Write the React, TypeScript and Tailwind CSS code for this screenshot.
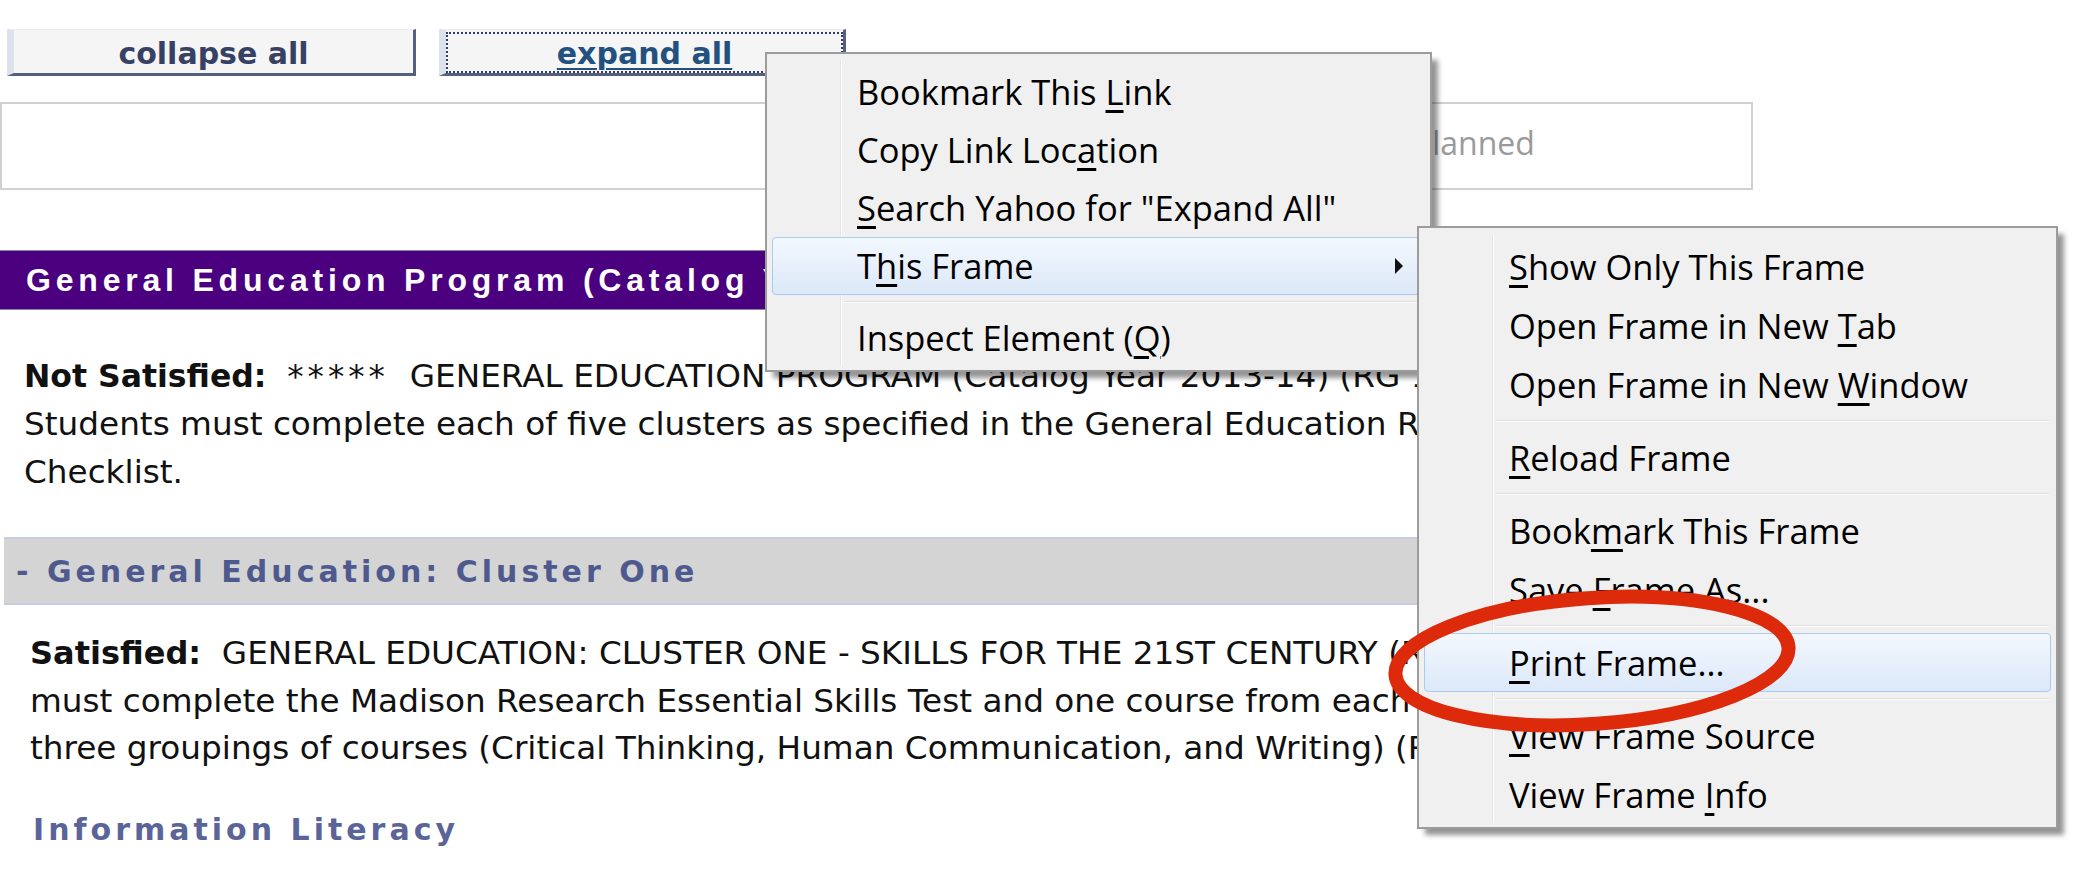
import React from "react";

type Item = { label: React.ReactNode; active?: boolean; arrow?: boolean } | "sep";

const mainItems: Item[] = [
  { label: <>Bookmark This <u>L</u>ink</> },
  { label: <>Copy Link Loc<u>a</u>tion</> },
  { label: <><u>S</u>earch Yahoo for "Expand All"</> },
  { label: <>T<u>h</u>is Frame</>, active: true, arrow: true },
  "sep",
  { label: <>Inspect Element (<u>Q</u>)</> },
];

const frameItems: Item[] = [
  { label: <><u>S</u>how Only This Frame</> },
  { label: <>Open Frame in New <u>T</u>ab</> },
  { label: <>Open Frame in New <u>W</u>indow</> },
  "sep",
  { label: <><u>R</u>eload Frame</> },
  "sep",
  { label: <>Book<u>m</u>ark This Frame</> },
  { label: <>Save <u>F</u>rame As...</> },
  "sep",
  { label: <><u>P</u>rint Frame...</>, active: true },
  "sep",
  { label: <><u>V</u>iew Frame Source</> },
  { label: <>View Frame <u>I</u>nfo</> },
];

function Menu({ items, rowH, className }: { items: Item[]; rowH: string; className: string }) {
  return (
    <div
      className={`absolute border-2 border-[#9c9c9c] bg-[#f0f0f0] px-[5px] pt-[9px] pb-[3px] shadow-[7px_7px_5px_-1px_rgba(0,0,0,0.42)] ${className}`}
      style={{ fontFamily: '"Open Sans", "Noto Sans", sans-serif' }}
    >
      {/* icon column divider */}
      <div className="absolute top-[6px] bottom-[4px] left-[73px] w-[2px] border-l border-[#e2e3e3] bg-white" />
      {items.map((it, i) =>
        it === "sep" ? (
          <div key={i} className="relative flex h-[14px] flex-col justify-center pl-[72px] pr-[2px]">
            <div className="h-px bg-[#e0e0e0]" />
            <div className="h-px bg-white" />
          </div>
        ) : (
          <div
            key={i}
            className={`relative flex ${rowH} items-center rounded-[4px] border pl-[84px] pr-[20px] text-[34.5px] text-black ${
              it.active
                ? "border-[#a9cbf3] bg-gradient-to-b from-[#f3f8fe] to-[#dce8f8]"
                : "border-transparent"
            }`}
          >
            <span className="flex-1 whitespace-nowrap underline-offset-[5px]">{it.label}</span>
            {it.arrow && (
              <svg width="10" height="16" viewBox="0 0 10 16">
                <path d="M1 0 L9 8 L1 16 Z" fill="#111" />
              </svg>
            )}
          </div>
        )
      )}
    </div>
  );
}

export default function App() {
  const body = { fontFamily: '"DejaVu Sans", Verdana, sans-serif' };
  return (
    <div className="relative h-[894px] w-[2086px] overflow-hidden bg-white" style={body}>
      <div className="w-[1753px] pt-[29px]">
        {/* toolbar buttons */}
        <div className="flex gap-[23px] pl-[7px]">
          <div className="flex h-[47px] w-[409px] items-center justify-center border-t border-r-[3px] border-b-[3px] border-l-[7px] border-t-[#eeeeee] border-r-[#56607e] border-b-[#56607e] border-l-[#dce1ec] bg-[#f5f5f5] pt-[3px] text-[30px] font-bold text-[#374164]">
            collapse all
          </div>
          <div className="flex h-[47px] w-[407px] border-t border-r-[3px] border-b-[3px] border-l-[7px] border-t-[#eeeeee] border-r-[#56607e] border-b-[#56607e] border-l-[#dce1ec] bg-[#f5f5f5] pt-[2px]">
            <div className="flex flex-1 items-center justify-center border-2 border-dotted border-[#2d3f66] pt-[2px] text-[30px] font-bold text-[#22507f] underline decoration-2 underline-offset-[4px]">
              expand all
            </div>
          </div>
        </div>

        {/* legend box */}
        <div
          className="mt-[26px] flex h-[88px] items-center border-2 border-[#d0d0d0] pb-[6px] pl-[1411px] text-[32px] text-[#9a9a9a]"
          style={{ fontFamily: '"Open Sans", "Noto Sans", sans-serif' }}
        >
          Planned
        </div>

        {/* program header */}
        <div
          className="mt-[60px] flex h-[60px] items-center border-y border-[#8d86a8] bg-[#4a007f] pl-[26px] text-[32px] font-bold tracking-[4.8px] text-white"
          style={{ fontFamily: '"Liberation Sans", Arial, sans-serif' }}
        >
          General Education Program (Catalog Year 2013-14)
        </div>

        <p className="mt-[42px] whitespace-nowrap pl-[24px] text-[32.7px] leading-[48px] text-[#111]">
          <b className="text-[31.5px]">Not Satisfied:</b>&nbsp;&nbsp;
          <span className="tracking-[4px]">*****</span>&nbsp; GENERAL EDUCATION PROGRAM (Catalog Year 2013-14) (RG 1000) *****
          <br />
          Students must complete each of five clusters as specified in the General Education Requirements
          <br />
          Checklist.
        </p>

        {/* cluster header */}
        <div className="mt-[41px] ml-[4px] flex h-[68px] items-center border-y-2 border-[#c6cde0] bg-[#d4d4d4] pl-[12px] text-[30px] font-bold tracking-[4px] text-[#4e5a8e]">
          - General Education: Cluster One
        </div>

        <p className="mt-[25px] whitespace-nowrap pl-[30px] text-[32.7px] leading-[47.5px] text-[#111]">
          <b className="text-[32px]">Satisfied:</b>&nbsp; GENERAL EDUCATION: CLUSTER ONE - SKILLS FOR THE 21ST CENTURY (RG 1100) Students
          <br />
          must complete the Madison Research Essential Skills Test and one course from each of the
          <br />
          three groupings of courses (Critical Thinking, Human Communication, and Writing) (RG 1100)
        </p>

        <div className="mt-[33px] pl-[33px] text-[30px] font-bold leading-[48px] tracking-[4px] text-[#5a6499]">
          Information Literacy
        </div>
      </div>

      {/* context menus */}
      <Menu items={mainItems} rowH="h-[58px]" className="left-[765px] top-[52px] w-[667px]" />
      <Menu items={frameItems} rowH="h-[59px]" className="left-[1417px] top-[226px] w-[641px]" />

      {/* red annotation ring */}
      <svg
        className="absolute left-[1340px] top-[560px] h-[210px] w-[520px] max-w-none overflow-visible"
        width="520"
        height="210"
        viewBox="0 0 520 210"
      >
        <ellipse cx="252" cy="101" rx="197" ry="63" transform="rotate(-4 252 101)" fill="none" stroke="#dc2a0b" strokeWidth="14" />
      </svg>
    </div>
  );
}
